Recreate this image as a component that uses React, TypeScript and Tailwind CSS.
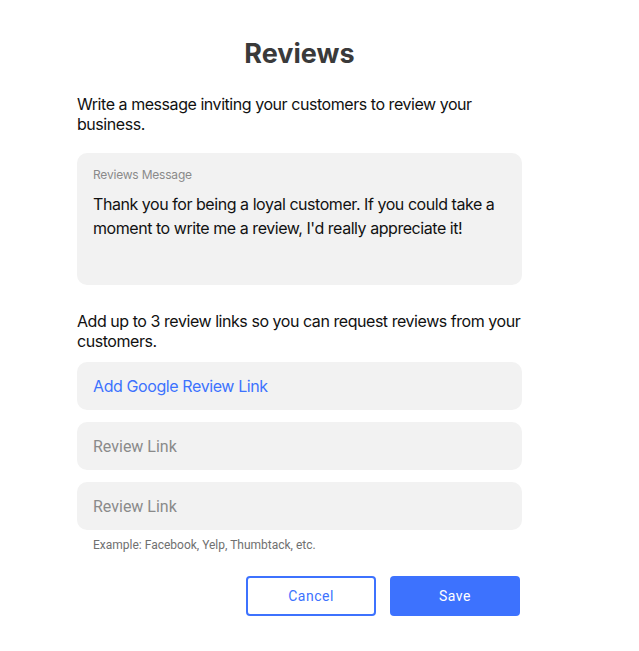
import React, { useState } from 'react';

const links = [
  { placeholder: 'Add Google Review Link', accent: true },
  { placeholder: 'Review Link', accent: false },
  { placeholder: 'Review Link', accent: false }
];

const App = () => {
  const [message, setMessage] = useState(
    "Thank you for being a loyal customer. If you could take a moment to write me a review, I'd really appreciate it!"
  );

  return (
    <div className="min-h-screen bg-white font-['Inter',sans-serif] text-[#111]">
      <div className="ml-[77px] w-[445px] pt-[37px]">
        <h1 className="text-center text-[27px] font-bold leading-[34px] text-[#3a3a3a]">Reviews</h1>

        <p className="mt-[23px] text-[16px] leading-[20px] tracking-[-0.45px]">
          Write a message inviting your customers to review your business.
        </p>

        <div className="mt-[19px] h-[132px] rounded-[10px] bg-[#f2f2f2] px-4 pt-[14px]">
          <label className="block text-[12px] leading-[16px] tracking-[-0.2px] text-[#8a8a8a]">Reviews Message</label>
          <textarea
            value={message}
            onChange={(e) => setMessage(e.target.value)}
            className="mt-[9px] h-[80px] w-full resize-none bg-transparent text-[16px] leading-[24px] tracking-[-0.45px] outline-none"
          />
        </div>

        <p className="mt-[26px] text-[16px] leading-[20px] tracking-[-0.45px]">
          Add up to 3 review links so you can request reviews from your customers.
        </p>

        <div className="mt-[11px] flex flex-col gap-3">
          {links.map((link, i) => (
            <input
              key={i}
              placeholder={link.placeholder}
              className={`h-[48px] w-full rounded-[10px] bg-[#f2f2f2] px-4 text-[16px] outline-none ${
                link.accent
                  ? 'tracking-[-0.4px] placeholder:text-[#3d72fe]'
                  : "font-['Roboto',sans-serif] placeholder:text-[#8a8a8a]"
              }`}
            />
          ))}
        </div>

        <p className="mt-[7px] pl-4 font-['Roboto',sans-serif] text-[12px] leading-[16px] text-[#707070]">
          Example: Facebook, Yelp, Thumbtack, etc.
        </p>

        <div className="mt-[23px] flex justify-end gap-[14px] pr-[2px] font-['Roboto',sans-serif]">
          <button className="h-[40px] w-[130px] rounded-[4px] border-2 border-[#3d72fe] bg-white text-[14px] tracking-[0.5px] text-[#3d72fe]">
            Cancel
          </button>
          <button className="h-[40px] w-[130px] rounded-[4px] bg-[#3d72fe] text-[14px] tracking-[0.5px] text-white">
            Save
          </button>
        </div>
      </div>
    </div>
  );
};

export default App;
